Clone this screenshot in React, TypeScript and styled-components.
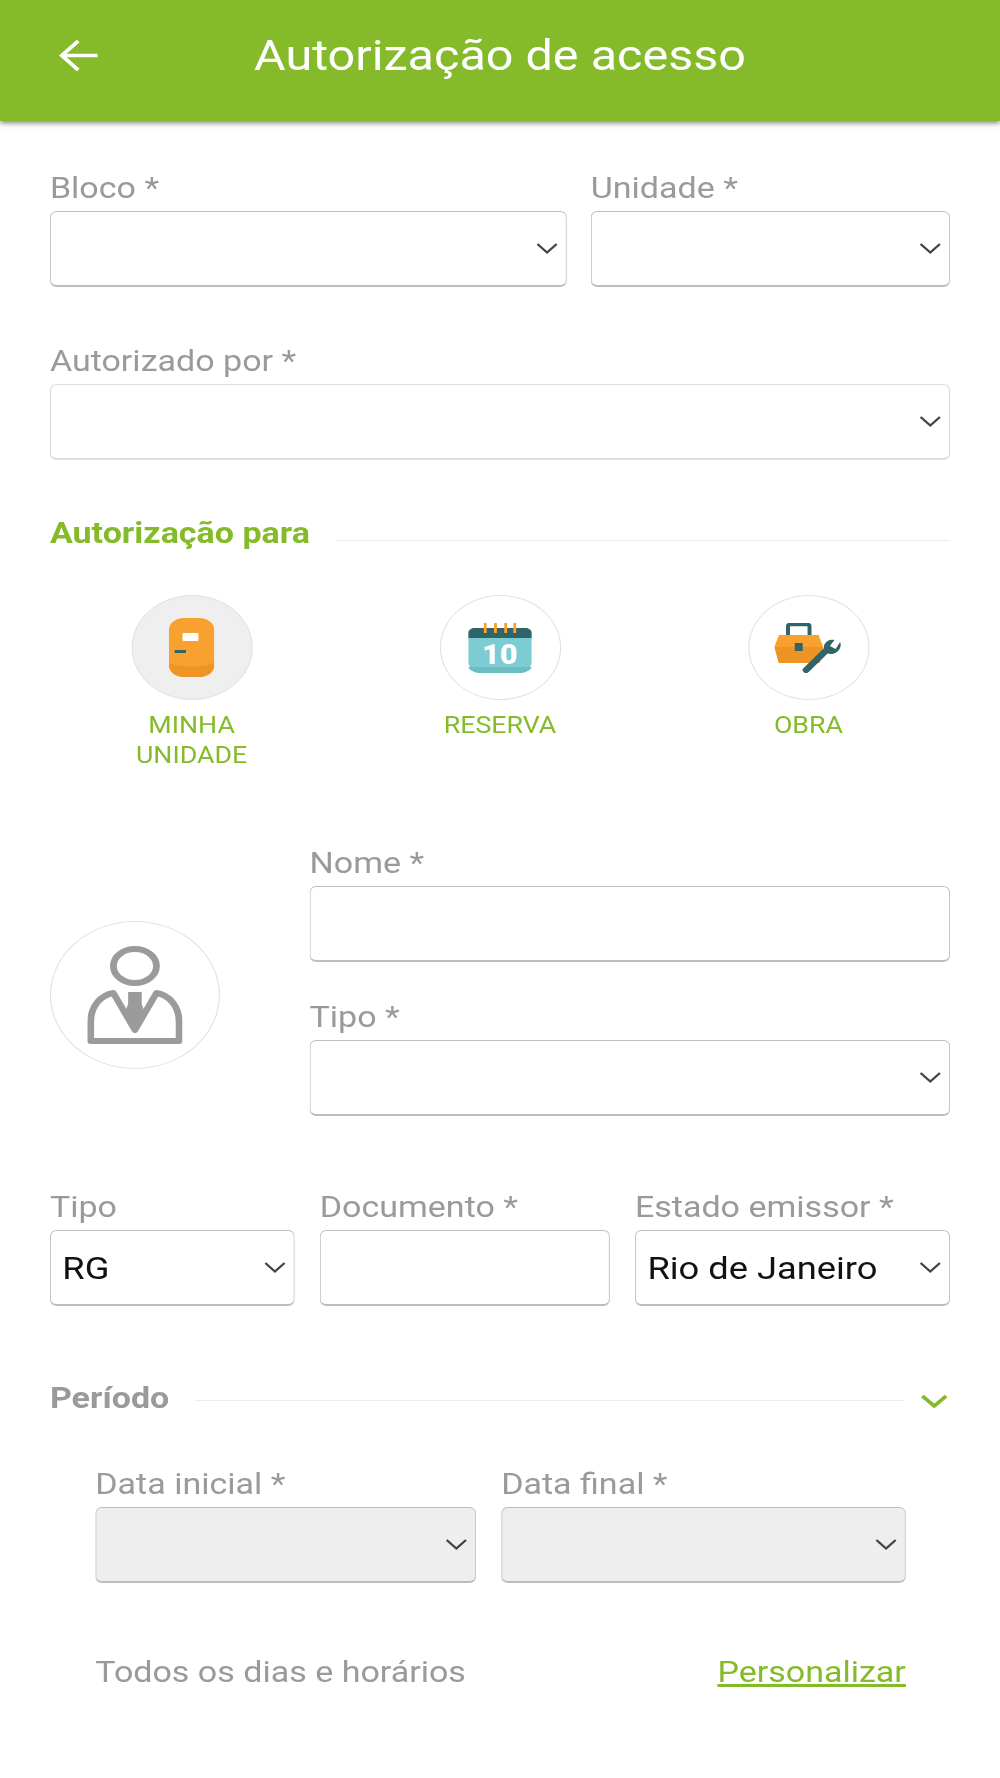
import styled, { createGlobalStyle } from 'styled-components'

const GlobalStyle = createGlobalStyle`
  html, body {
    margin: 0;
    padding: 0;
    background: #ffffff;
    overflow: hidden;
  }
  * {
    box-sizing: border-box;
  }
`

const Chevron = () => (
  <ChevronIcon viewBox="0 0 19 11">
    <polyline points="1,1 9.5,9.5 18,1" />
  </ChevronIcon>
)

const Field = ({
  label,
  value,
  select,
  light,
  disabled,
}: {
  label: string
  value?: string
  select?: boolean
  light?: boolean
  disabled?: boolean
}) => (
  <div>
    <Label>{label}</Label>
    <Box $light={light} $disabled={disabled}>
      <span>{value}</span>
      {select && <Chevron />}
    </Box>
  </div>
)

const DoorIcon = () => (
  <svg width="40" height="59" viewBox="0 0 40 59">
    <path d="M0 12 C0 5 6 0 13 0 H27 C34 0 40 5 40 12 V47 C40 54 34 59 27 59 H13 C6 59 0 54 0 47 Z" fill="#f9a12e" />
    <path d="M0 47 V44 C4 50 36 50 40 44 V47 C40 54 34 59 27 59 H13 C6 59 0 54 0 47 Z" fill="#ee9424" />
    <rect x="12" y="15" width="14" height="8" rx="1" fill="#ffffff" />
    <rect x="5" y="32" width="10" height="3" fill="#2f6468" />
  </svg>
)

const CalendarIcon = () => (
  <svg width="56" height="50" viewBox="0 0 56 50">
    <path d="M0 10 C0 7 3 5 6 5 H50 C53 5 56 7 56 10 V38 C56 45 51 50 44 50 H12 C5 50 0 45 0 38 Z" fill="#7ccdd3" />
    <path d="M0 15 V10 C0 7 3 5 6 5 H50 C53 5 56 7 56 10 V15 Z" fill="#2f6468" />
    <path d="M0 44 H56 C54 48 50 50 44 50 H12 C6 50 2 48 0 44 Z" fill="#6bbcc3" />
    <g stroke="#f9a12e" strokeWidth="2.5">
      <line x1="15" y1="0" x2="15" y2="10" />
      <line x1="24" y1="0" x2="24" y2="10" />
      <line x1="33" y1="0" x2="33" y2="10" />
      <line x1="41" y1="0" x2="41" y2="10" />
    </g>
    <text x="28" y="41" textAnchor="middle" fontFamily="Roboto, sans-serif" fontWeight="900" fontSize="27" fill="#ffffff">
      10
    </text>
  </svg>
)

const ToolboxIcon = () => (
  <svg width="60" height="50" viewBox="0 0 60 50">
    <path d="M12 13 V3 C12 2 13 1.500 14 1.500 H29 C30 1.500 31 2 31 3 V13" fill="none" stroke="#2f6468" strokeWidth="3.500" />
    <polygon points="4,12 39,12 43,24 40,40 4,40 0,24" fill="#f9a12e" />
    <polygon points="0,24 43,24 40,40 4,40" fill="#ee9424" />
    <rect x="18" y="20" width="7" height="8" fill="#2f6468" />
    <path d="M28 47 L47 26" stroke="#2f6468" strokeWidth="6" strokeLinecap="round" />
    <path d="M53 17 L49 23 L54 26 L58 19 C60 24 56 31 50 31 C44 31 42 24 45 20 C47 17 50 16 53 17 Z" fill="#2f6468" />
  </svg>
)

const PersonIcon = () => (
  <svg width="84" height="98" viewBox="0 0 84 98">
    <g fill="none" stroke="#9b9b9b" strokeWidth="6" strokeLinejoin="round">
      <ellipse cx="42" cy="20" rx="19" ry="17" />
      <path d="M3 95 V76 C3 60 12 49 23 47 L42 84 L61 47 C72 49 81 60 81 76 V95 Z" />
    </g>
    <polygon points="36,46 48,46 48,58 52,70 42,86 32,70 36,58" fill="#9b9b9b" />
  </svg>
)

export default function App() {
  return (
    <Page>
      <GlobalStyle />
      <Header>
        <svg width="36" height="33" viewBox="0 0 36 33">
          <path d="M34 16.500 H3 M17 2 L2.500 16.500 L17 31" fill="none" stroke="#ffffff" strokeWidth="3.500" />
        </svg>
        <Title>Autorização de acesso</Title>
      </Header>
      <Main>
        <TopRow>
          <Field label="Bloco *" select />
          <Field label="Unidade *" select />
        </TopRow>
        <Block $top={57}>
          <Field label="Autorizado por *" select light />
        </Block>

        <Block $top={55}>
          <SectionHead>
            <SectionTitle $green>Autorização para</SectionTitle>
            <Rule $offset={16} />
          </SectionHead>
        </Block>

        <Options>
          <Option>
            <Circle $active>
              <DoorIcon />
            </Circle>
            <OptionLabel>MINHA UNIDADE</OptionLabel>
          </Option>
          <Option>
            <Circle>
              <CalendarIcon />
            </Circle>
            <OptionLabel>RESERVA</OptionLabel>
          </Option>
          <Option>
            <Circle>
              <ToolboxIcon />
            </Circle>
            <OptionLabel>OBRA</OptionLabel>
          </Option>
        </Options>

        <PersonRow>
          <Avatar>
            <PersonIcon />
          </Avatar>
          <PersonFields>
            <Field label="Nome *" />
            <Field label="Tipo *" select />
          </PersonFields>
        </PersonRow>

        <DocumentRow>
          <Field label="Tipo" value="RG" select />
          <Field label="Documento *" />
          <Field label="Estado emissor *" value="Rio de Janeiro" select />
        </DocumentRow>

        <Block $top={74}>
          <SectionHead>
            <SectionTitle>Período</SectionTitle>
            <Rule $offset={6} />
            <PeriodChevron viewBox="0 0 24 14">
              <polyline points="1.500,2 12,12 22.500,2" />
            </PeriodChevron>
          </SectionHead>
        </Block>

        <Period>
          <DateRow>
            <Field label="Data inicial *" select disabled />
            <Field label="Data final *" select disabled />
          </DateRow>
          <ScheduleRow>
            <Schedule>Todos os dias e horários</Schedule>
            <CustomLink href="#">Personalizar</CustomLink>
          </ScheduleRow>
        </Period>
      </Main>
    </Page>
  )
}

/* the reference is an 882px wide screen stretched out to 1000px */
const Page = styled.div`
  width: 882px;
  height: 1778px;
  transform: scaleX(1.13379);
  transform-origin: left top;
  filter: blur(0.7px);
  overflow: hidden;
  font-family: Roboto, 'Liberation Sans', sans-serif;
  background: #ffffff;
`

const Header = styled.header`
  height: 121px;
  padding: 0 0 11px 52px;
  display: grid;
  grid-template-columns: 1fr auto 1fr;
  align-items: center;
  background: #85bb2b;
  box-shadow: 0 2px 5px rgba(0, 0, 0, 0.5);
  svg {
    display: block;
  }
`

const Title = styled.h1`
  margin: 0 0 0 -52px;
  color: #ffffff;
  font-size: 42.8px;
  font-weight: 400;
  line-height: 48px;
  white-space: nowrap;
`

const Main = styled.main`
  padding: 50px 44px 0;
`

const TopRow = styled.div`
  display: grid;
  grid-template-columns: 456px 1fr;
  column-gap: 21px;
`

const Block = styled.div<{ $top: number }>`
  margin-top: ${(p) => p.$top}px;
`

const Label = styled.div`
  height: 34px;
  margin-bottom: 6px;
  color: #9a9a9a;
  font-size: 30px;
  line-height: 34px;
  white-space: nowrap;
`

const Box = styled.div<{ $light?: boolean; $disabled?: boolean }>`
  height: 76px;
  padding: 0 7px 0 10px;
  display: flex;
  align-items: center;
  justify-content: space-between;
  border: 1px solid ${(p) => (p.$light ? '#dcdcdc' : '#c8c8c8')};
  border-bottom: 2px solid ${(p) => (p.$light ? '#dcdcdc' : '#bdbdbd')};
  border-top-color: ${(p) => (p.$light ? '#dcdcdc' : '#bdbdbd')};
  border-radius: 6px;
  background: ${(p) => (p.$disabled ? '#eeeeee' : '#ffffff')};
  color: #111111;
  font-size: 32px;
  white-space: nowrap;
`

const ChevronIcon = styled.svg`
  flex: none;
  width: 19px;
  height: 11px;
  polyline {
    fill: none;
    stroke: #444444;
    stroke-width: 2;
  }
`

const SectionHead = styled.div`
  display: flex;
  align-items: center;
  height: 34px;
`

const SectionTitle = styled.div<{ $green?: boolean }>`
  margin-right: 23px;
  color: ${(p) => (p.$green ? '#85bb2b' : '#9a9a9a')};
  font-size: 30px;
  font-weight: 700;
  white-space: nowrap;
`

const Rule = styled.div<{ $offset: number }>`
  flex: 1;
  height: 1px;
  margin-top: ${(p) => p.$offset}px;
  background: #ececec;
`

const PeriodChevron = styled.svg`
  flex: none;
  width: 24px;
  height: 14px;
  margin: 7px 2px 0 14px;
  polyline {
    fill: none;
    stroke: #85bb2b;
    stroke-width: 3.5;
  }
`

const Options = styled.div`
  margin-top: 46px;
  display: grid;
  grid-template-columns: repeat(3, 230px);
  column-gap: 42px;
  justify-content: center;
`

const Option = styled.div`
  display: flex;
  flex-direction: column;
  align-items: center;
`

const Circle = styled.div<{ $active?: boolean }>`
  width: 107px;
  height: 105px;
  display: flex;
  align-items: center;
  justify-content: center;
  border: 1px solid #e2e2e2;
  border-radius: 50%;
  background: ${(p) => (p.$active ? '#efefef' : '#ffffff')};
`

const OptionLabel = styled.div`
  width: 130px;
  margin-top: 10px;
  color: #85bb2b;
  font-size: 23.6px;
  line-height: 30px;
  text-align: center;
`

const PersonRow = styled.div`
  margin-top: 76px;
  display: flex;
  align-items: center;
`

const Avatar = styled.div`
  flex: none;
  width: 150px;
  height: 148px;
  margin: 28px 79px 0 0;
  display: flex;
  align-items: center;
  justify-content: center;
  border: 1px solid #e2e2e2;
  border-radius: 50%;
`

const PersonFields = styled.div`
  flex: 1;
  display: grid;
  row-gap: 38px;
`

const DocumentRow = styled.div`
  margin-top: 74px;
  display: grid;
  grid-template-columns: 216px 256px 1fr;
  column-gap: 22px;
`

const Period = styled.section`
  margin-top: 53px;
  padding: 0 39px 0 40px;
`

const DateRow = styled.div`
  display: grid;
  grid-template-columns: 336px 1fr;
  column-gap: 22px;
`

const ScheduleRow = styled.div`
  margin-top: 72px;
  display: flex;
  justify-content: space-between;
  font-size: 30px;
  line-height: 34px;
`

const Schedule = styled.span`
  color: #9a9a9a;
`

const CustomLink = styled.a`
  color: #85bb2b;
  text-decoration: underline;
`
